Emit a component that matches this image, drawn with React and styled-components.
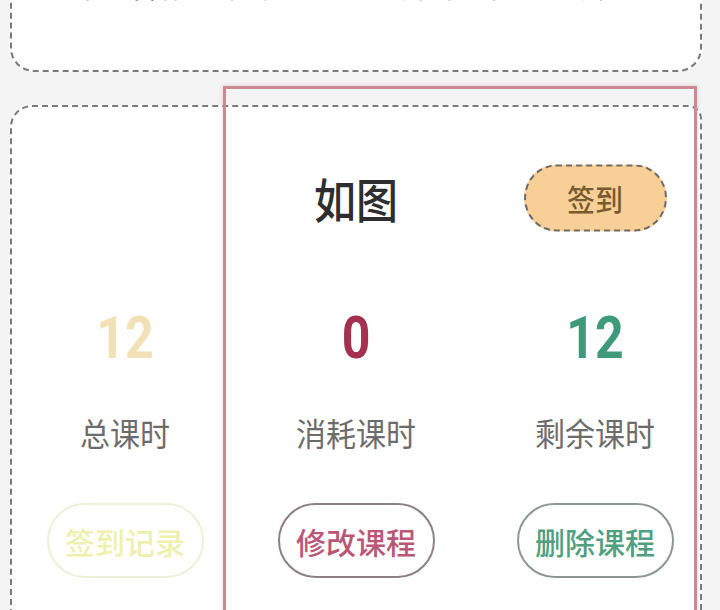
import React from 'react'
import styled, { createGlobalStyle } from 'styled-components'

const GlobalStyle = createGlobalStyle`
  html, body {
    margin: 0;
    padding: 0;
    background: #f4f4f4;
  }
  body {
    font-family: 'Noto Sans CJK SC', 'Noto Sans', sans-serif;
    overflow: hidden;
  }
`

const stats = [
  {
    value: '12',
    label: '总课时',
    action: '签到记录',
    tone: { value: '#f2e1b6', text: '#eef0ae', border: '#eef0d8' },
  },
  {
    value: '0',
    label: '消耗课时',
    action: '修改课程',
    tone: { value: '#a3314f', text: '#bb5676', border: '#8c8084' },
  },
  {
    value: '12',
    label: '剩余课时',
    action: '删除课程',
    tone: { value: '#3e9a79', text: '#4f9f80', border: '#8d9692' },
  },
]

export default function App() {
  return (
    <Page>
      <GlobalStyle />
      <InfoCard>
        <InfoRow>
          <InfoText>课程名称：钢琴</InfoText>
          <InfoText>开课时间：每周六</InfoText>
        </InfoRow>
      </InfoCard>

      <CourseCard>
        <Cell $col={2}>
          <Title>如图</Title>
        </Cell>
        <Cell $col={3} $shift>
          <SignBadge>签到</SignBadge>
        </Cell>

        {stats.map((s, i) => (
          <Column key={s.label} $col={i + 1} $shift={i === 2}>
            <Value $color={s.tone.value}>{s.value}</Value>
            <Label>{s.label}</Label>
            <ActionButton $color={s.tone.text} $border={s.tone.border}>
              {s.action}
            </ActionButton>
          </Column>
        ))}
      </CourseCard>

      <Highlight />
    </Page>
  )
}

const Page = styled.div`
  position: relative;
  display: flow-root;
  width: 720px;
  height: 610px;
  overflow: hidden;
  padding: 0 18px 0 10px;
  box-sizing: border-box;
`

const InfoCard = styled.div`
  margin-top: -60px;
  height: 132px;
  box-sizing: border-box;
  background: #fff;
  border: 2px dashed #7a7a7a;
  border-radius: 24px;
  padding: 22px 60px 0 56px;
`

const InfoRow = styled.div`
  display: flex;
  justify-content: space-between;
  align-items: center;
`

const InfoText = styled.span`
  font-size: 30px;
  line-height: 40px;
  color: #333;
`

const CourseCard = styled.div`
  margin-top: 33px;
  height: 560px;
  box-sizing: border-box;
  background: #fff;
  border: 2px dashed #7a7a7a;
  border-bottom: none;
  border-radius: 22px 14px 0 0;
  display: grid;
  grid-template-columns: 226px 236px 1fr;
  grid-template-rows: 64px auto;
  align-content: start;
  padding-top: 59px;
`

const Cell = styled.div`
  grid-column: ${p => p.$col};
  grid-row: 1;
  display: flex;
  align-items: center;
  justify-content: center;
  padding-left: ${p => (p.$shift ? '16px' : '0')};
`

const Column = styled.div`
  grid-column: ${p => p.$col};
  grid-row: 2;
  display: flex;
  flex-direction: column;
  align-items: center;
  padding-left: ${p => (p.$shift ? '16px' : '0')};
`

const Title = styled.div`
  font-size: 42px;
  font-weight: 500;
  line-height: 64px;
  color: #2e2e2e;
  transform: scaleY(1.12);
`

const SignBadge = styled.div`
  width: 143px;
  height: 64px;
  box-sizing: border-box;
  display: flex;
  align-items: center;
  justify-content: center;
  background: #f9cf98;
  border: 2px dashed #6e6a64;
  border-radius: 32px;
  font-size: 28px;
  font-weight: 500;
  color: #7a5a2f;
  transform: scaleY(1.05);
`

const Value = styled.div`
  margin-top: 78px;
  font-family: Roboto, 'Liberation Sans', sans-serif;
  font-weight: 700;
  font-size: 50px;
  line-height: 60px;
  color: ${p => p.$color};
  transform: scaleY(1.2);
`

const Label = styled.div`
  margin-top: 44px;
  font-size: 30px;
  line-height: 40px;
  color: #6c6c6c;
  transform: scaleY(1.07);
`

const ActionButton = styled.div`
  margin-top: 51px;
  width: 157px;
  height: 75px;
  box-sizing: border-box;
  display: flex;
  align-items: center;
  justify-content: center;
  border: 2.5px solid ${p => p.$border};
  border-radius: 38px;
  font-size: 30px;
  font-weight: 500;
  color: ${p => p.$color};
`

const Highlight = styled.div`
  position: absolute;
  left: 223px;
  top: 86px;
  width: 474px;
  height: 600px;
  box-sizing: border-box;
  border: 3px solid #c98a93;
  box-shadow: 0 0 4px rgba(220, 150, 160, 0.45);
  pointer-events: none;
`
